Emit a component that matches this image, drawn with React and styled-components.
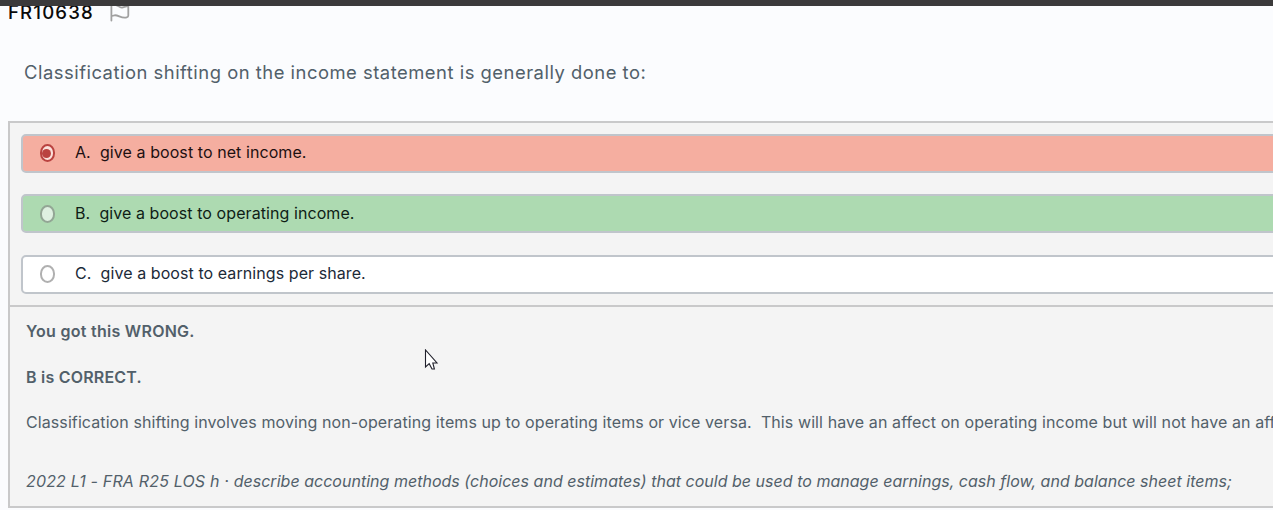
import React from 'react';
import styled, { createGlobalStyle } from 'styled-components';

const Global = createGlobalStyle`
  * { box-sizing: border-box; }
  html, body { margin: 0; height: 510px; overflow: hidden; }
  body { background: #fbfcfe; font-family: Inter, "Liberation Sans", sans-serif; color: #52606a; }
`;
const Page = styled.main`
  position: relative; height: 510px; overflow: hidden; border-top: 6px solid #3b3a3b; background: #fbfcfe;
`;
const Header = styled.header`
  display: flex; height: 48px; padding-left: 8px; gap: 15px;
`;
const Code = styled.h1`
  margin: -5px 0 0; font-size: 18.6px; line-height: 23px; font-weight: 550; color: #0a0a0a; letter-spacing: 1.15px; white-space: nowrap;
`;
const Flag = styled.svg`
  width: 22px; height: 24px; margin-top: -6.5px; fill: none; stroke: #a0a0a0; stroke-width: 1.8; stroke-linecap: round; stroke-linejoin: round;
`;
const Question = styled.p`
  margin: 0 0 0 24px; height: 67px; font-size: 18.4px; line-height: 36px; letter-spacing: 0.51px; font-weight: 380; white-space: nowrap;
`;
const Panel = styled.section`
  margin-left: 8px; width: 1300px; height: 387px; border: 2px solid #c9c9ca; background: #f4f4f4;
`;
const Options = styled.div`
  display: flex; flex-direction: column; gap: 21.3px; padding: 11px 0 0 11px; height: 184px; border-bottom: 2px solid #c9c9ca;
`;
const Option = styled.label`
  display: flex; align-items: center; height: 39px; flex: none; padding-left: 17px; gap: 20px;
  border: 2px solid #c0c5cb; border-radius: 5px; background: ${p => p.$bg};
  color: ${p => p.$ink}; font-size: 16px;
`;
const Answer = styled.span`
  white-space: pre; letter-spacing: 0.075px; line-height: 19px; padding-bottom: 1.4px; font-weight: 380;
`;
const Radio = styled.span`
  width: 15px; height: 18px; margin-bottom: 0.3px; border-radius: 7.5px / 8.5px; border: 2px solid ${p => p.$color}; background: ${p => p.$fill};
  display: flex; align-items: center;
`;
const Dot = styled.i`
  width: 9px; height: 9px; border-radius: 50%; background: #ba4340;
`;
const Feedback = styled.div`padding: 15px 0 0 16px; white-space: pre; font-size: 16px;`;
const Line = styled.p`
  margin: 0; height: ${p => p.$h}px; line-height: 19px; letter-spacing: ${p => p.$ls || 0}px; font-weight: ${p => p.$bold ? 590 : 385}; font-style: ${p => p.$italic ? 'italic' : 'normal'};
`;
const Reference = styled.span`letter-spacing: 0.17px;`;
const Pointer = styled.svg`
  position: absolute; left: 424px; top: 343px; width: 16px; height: 22px;
`;

export default function App() {
  return <Page><Global />
    <Header>
      <Code>FR10638</Code>
      <Flag viewBox="0 0 22 24"><path d="M2.4 20.5V4.5C7 3 10 8 13 7.5C15 7.2 17 6 19.3 6V15.5Q19.3 17 17.7 17.4C12.5 18.9 9.2 14.7 5.5 15.3Q3.8 15.6 2.4 16.3" /></Flag>
    </Header>
    <Question>Classification shifting on the income statement is generally done to:</Question>
    <Panel>
      <Options>
        <Option $bg="#f5aea0" $ink="#1d1011"><Radio $color="#ba4340" $fill="#fbe0da"><Dot /></Radio><Answer>A.  give a boost to net income.</Answer></Option>
        <Option $bg="#addab1" $ink="#0f1d16"><Radio $color="#93a695" $fill="#dff0e1" /><Answer>B.  give a boost to operating income.</Answer></Option>
        <Option $bg="#fff" $ink="#1c2a38"><Radio $color="#b0b0b0" $fill="#fff" /><Answer>C.  give a boost to earnings per share.</Answer></Option>
      </Options>
      <Feedback>
        <Line $bold $h={46} $ls={0.27}>You got this WRONG.</Line>
        <Line $bold $h={45} $ls={0.21}>B is CORRECT.</Line>
        <Line $h={59} $ls={0.093}>Classification shifting involves moving non-operating items up to operating items or vice versa.  This will have an affect on operating income but will not have an affect</Line>
        <Line $italic $h={20} $ls={0.02}><Reference>2022 L1 - FRA R25 LOS h · </Reference>describe accounting methods (choices and estimates) that could be used to manage earnings, cash flow, and balance sheet items;</Line>
      </Feedback>
    </Panel>
    <Pointer viewBox="0 0 16 22"><path d="M1.5 1V18L5.2 14.7L8 20H10.4L8.8 14H13Z" fill="#fff" stroke="#20202b" strokeWidth="1.1" /></Pointer>
  </Page>;
}
